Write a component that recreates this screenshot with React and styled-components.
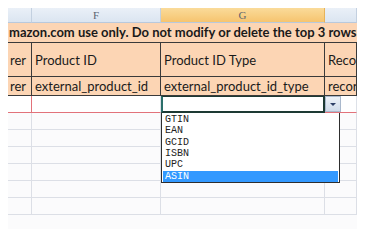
import styled, { createGlobalStyle } from 'styled-components';

const GlobalStyle = createGlobalStyle`
  html, body {
    margin: 0;
    padding: 0;
    background: #ffffff;
  }
  body {
    font-family: Lato, "Liberation Sans", sans-serif;
  }
`;

const Page = styled.div`
  padding: 8px 0 0 8px;
  width: 376px;
  height: 247px;
  box-sizing: border-box;
`;

const Sheet = styled.div`
  position: relative;
  display: grid;
  grid-template-columns: 24px 129px 164px 32px;
  grid-template-rows: 15px 20px 34px 19px 17px repeat(6, 17px);
  width: 349px;
  height: 221px;
  overflow: hidden;
  background: #fbfbfc;
`;

const ColHeader = styled.div`
  box-sizing: border-box;
  border-right: 1px solid ${p => (p.$active ? '#e6b35a' : '#c3d0e0')};
  border-bottom: 1px solid #b9c9dc;
  background: ${p =>
    p.$active
      ? 'linear-gradient(#fadb9a, #f6c46f)'
      : 'linear-gradient(#eaf0f8, #dbe5f1)'};
  color: #5b6470;
  font-family: "Liberation Serif", serif;
  font-size: 11px;
  line-height: 14px;
  text-align: center;
`;

const TitleRow = styled.div`
  grid-column: 1 / 5;
  box-sizing: border-box;
  background: #fcd5b4;
  border-bottom: 1px solid #3a3a3a;
  font-weight: 700;
  font-size: 13px;
  line-height: 19px;
  color: #1a1a1a;
  white-space: nowrap;
  overflow: hidden;
  padding-left: 1px;
`;

const PeachCell = styled.div`
  box-sizing: border-box;
  display: flex;
  align-items: center;
  background: #fcd5b4;
  border-right: 1px solid #3a3a3a;
  border-bottom: 1px solid #3a3a3a;
  padding-left: ${p => (p.$first ? '2px' : '3px')};
  font-size: 13px;
  color: #1a1a1a;
  white-space: nowrap;
  overflow: hidden;
`;

const EditCell = styled.div`
  box-sizing: border-box;
  background: #ffffff;
  border-right: 1px solid ${p => (p.$red ? '#e2727a' : '#dde1e8')};
  border-bottom: 1px solid #e2727a;
`;

const ActiveCell = styled.div`
  box-sizing: border-box;
  background: #ffffff;
  border: 2px solid #1d3a34;
  border-top-width: 1px;
  border-left-color: #2b6f6a;
`;

const Cell = styled.div`
  box-sizing: border-box;
  border-right: 1px solid #dcdfe6;
  border-bottom: 1px solid #dcdfe6;
`;

const DropButton = styled.div`
  position: absolute;
  left: 317px;
  top: 88px;
  width: 16px;
  height: 16px;
  box-sizing: border-box;
  border: 1px solid #a9b8cc;
  background: linear-gradient(#eef3f9, #cfdbea);
  display: flex;
  align-items: center;
  justify-content: center;
`;

const Arrow = styled.span`
  width: 0;
  height: 0;
  border-left: 3px solid transparent;
  border-right: 3px solid transparent;
  border-top: 3px solid #2c3e66;
  margin-top: 1px;
`;

const ListBox = styled.ul`
  position: absolute;
  left: 153px;
  top: 105px;
  width: 179px;
  margin: 0;
  padding: 1px 1px 0;
  box-sizing: border-box;
  list-style: none;
  background: #ffffff;
  border: 1px solid #2e2e2e;
  border-top: none;
`;

const Option = styled.li`
  height: 11.33px;
  line-height: 11.33px;
  padding-left: 2px;
  font-family: "Liberation Mono", monospace;
  font-size: 10px;
  color: ${p => (p.$selected ? '#ffffff' : '#222222')};
  background: ${p => (p.$selected ? '#3399ff' : 'transparent')};
`;

const options = ['GTIN', 'EAN', 'GCID', 'ISBN', 'UPC', 'ASIN'];

export default function App() {
  return (
    <Page>
      <GlobalStyle />
      <Sheet>
        <ColHeader />
        <ColHeader>F</ColHeader>
        <ColHeader $active>G</ColHeader>
        <ColHeader />

        <TitleRow>mazon.com use only. Do not modify or delete the top 3 rows</TitleRow>

        <PeachCell $first>rer</PeachCell>
        <PeachCell>Product ID</PeachCell>
        <PeachCell>Product ID Type</PeachCell>
        <PeachCell>Recor</PeachCell>

        <PeachCell $first>rer</PeachCell>
        <PeachCell>external_product_id</PeachCell>
        <PeachCell>external_product_id_type</PeachCell>
        <PeachCell>recor</PeachCell>

        <EditCell $red />
        <EditCell />
        <ActiveCell />
        <EditCell />

        {Array.from({ length: 24 }).map((_, i) => (
          <Cell key={i} />
        ))}

        <DropButton>
          <Arrow />
        </DropButton>
        <ListBox>
          {options.map(o => (
            <Option key={o} $selected={o === 'ASIN'}>
              {o}
            </Option>
          ))}
        </ListBox>
      </Sheet>
    </Page>
  );
}
